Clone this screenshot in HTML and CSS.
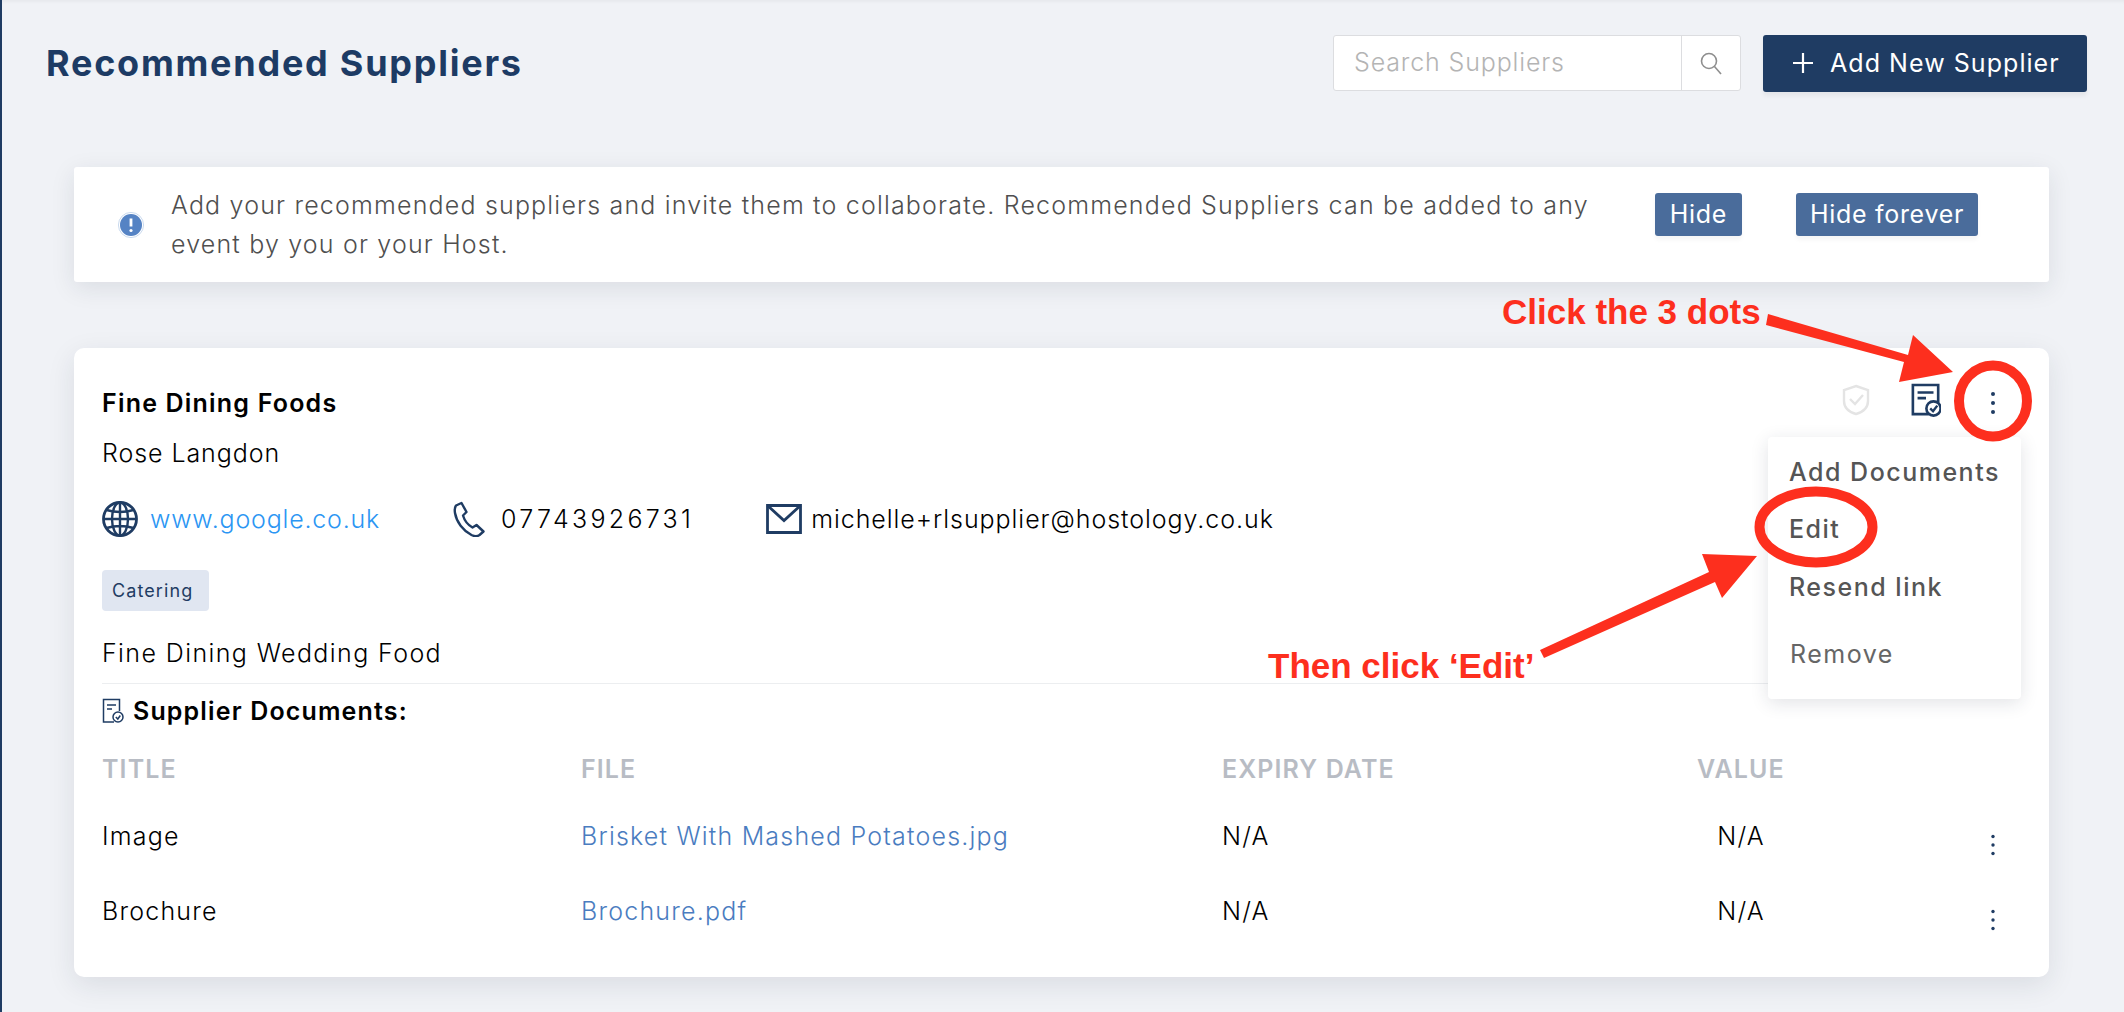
FILE: index.html
```html
<!DOCTYPE html>
<html lang="en">
<head>
<meta charset="utf-8">
<title>Recommended Suppliers</title>
<link rel="stylesheet" href="styles.css">
</head>
<body>
<div class="page">
  <header class="top">
    <h1 class="title">Recommended Suppliers</h1>
    <div class="search">
      <span class="search-text">Search Suppliers</span>
      <span class="search-btn">
        <svg width="24" height="24" viewBox="0 0 24 24" fill="none" stroke="#8e8e8e" stroke-width="1.6"><circle cx="10" cy="10" r="7.5"/><path d="M15.5 15.5 22 23"/></svg>
      </span>
    </div>
    <div class="add-btn">
      <svg width="22" height="22" viewBox="0 0 22 22" stroke="#fff" stroke-width="2.2"><path d="M11 1v20M1 11h20"/></svg>
      <span>Add New Supplier</span>
    </div>
  </header>

  <section class="alert">
    <svg class="alert-icon" width="26" height="26" viewBox="0 0 26 26"><circle cx="13" cy="13" r="12.600" fill="none" stroke="#bcd0ea" stroke-width=".8"/><circle cx="13" cy="13" r="11" fill="#5583c4"/><path d="M13 6.500v8" stroke="#fff" stroke-width="2.800"/><circle cx="13" cy="18.500" r="1.600" fill="#fff"/></svg>
    <p class="alert-text">Add your recommended suppliers and invite them to collaborate. Recommended Suppliers can be added to any event by you or your Host.</p>
    <span class="alert-btn hide">Hide</span>
    <span class="alert-btn forever">Hide forever</span>
  </section>

  <section class="card">
    <div class="name-row">
      <span class="name">Fine Dining Foods</span>
      <svg class="shield" width="28" height="32" viewBox="0 0 28 32" fill="none" stroke="#e4e4e4" stroke-width="2.400"><path d="M14 2 26 6v11c0 7-5 11-12 13C7 28 2 24 2 17V6Z"/><path d="m8 15 5 5 8-9"/></svg>
      <svg class="doc" width="30" height="34" viewBox="0 0 32 36" fill="none" stroke="#1f3c63" stroke-width="2.800"><path d="M19 33H2V2h27v19"/><path d="M7 10h17M7 16h9"/><circle cx="24" cy="27" r="7.600" fill="#fff"/><path d="m20.500 27 3 3 4.500-6" stroke-width="2.600"/></svg>
      <svg class="dots" width="24" height="24" viewBox="0 0 24 24" fill="#1f3c63"><circle cx="12" cy="4" r="2"/><circle cx="12" cy="13" r="2"/><circle cx="12" cy="22" r="2"/></svg>
    </div>
    <div class="contact-name">Rose Langdon</div>
    <div class="contact-row">
      <svg class="ic-globe" width="36" height="36" viewBox="0 0 36 36" fill="none" stroke="#1f3c63" stroke-width="2.400"><circle cx="18" cy="18" r="16.500" stroke-width="2.800"/><ellipse cx="18" cy="18" rx="8" ry="16.500"/><path d="M18 1.500v33M1.500 18h33M4.500 9q13.500 4 27 0M4.500 27q13.500-4 27 0"/></svg>
      <a class="web">www.google.co.uk</a>
      <svg class="ic-phone" width="34" height="36" viewBox="0 0 34 36" fill="none" stroke="#1f3c63" stroke-width="2.400" stroke-linejoin="round"><path d="M3 4.500 8.500 2l5 9-3.500 3.500c1.500 5 5 9.500 9.500 12l4-2.500 7 6.500-4 3.500c-2 1.500-5 1.500-8 0C10 29.500 3.500 21 2 12c-.5-3 0-6 1-7.500Z"/></svg>
      <span class="phone">07743926731</span>
      <svg class="ic-mail" width="36" height="30" viewBox="0 0 36 30" fill="none" stroke="#1f3c63" stroke-width="2.800"><path d="M1.500 1.500h33v27h-33Z"/><path d="m1.500 1.500 16.500 15 16.500-15"/></svg>
      <span class="email">michelle+rlsupplier@hostology.co.uk</span>
    </div>
    <span class="badge">Catering</span>
    <div class="desc">Fine Dining Wedding Food</div>
    <div class="docs-head">
      <svg width="22" height="26" viewBox="0 0 22 26" fill="none" stroke="#1f3c63" stroke-width="1.500"><path d="M12 24H1.500V1.500h16V13"/><path d="M5 7h9M5 11h5"/><circle cx="16" cy="19" r="5" fill="#fff"/><path d="m13.800 19 2 2 2.500-3.500"/></svg>
      <span>Supplier Documents:</span>
    </div>
    <div class="table">
      <div class="tr thead">
        <div class="th">TITLE</div><div class="th">FILE</div><div class="th">EXPIRY DATE</div><div class="th">VALUE</div>
      </div>
      <div class="tr first">
        <div class="td">Image</div><a class="td file">Brisket With Mashed Potatoes.jpg</a><div class="td">N/A</div><div class="td na">N/A</div>
        <svg class="row-dots" width="24" height="24" viewBox="0 0 24 24" fill="#1f3c63"><circle cx="12" cy="3.500" r="1.700"/><circle cx="12" cy="12" r="1.700"/><circle cx="12" cy="20.500" r="1.700"/></svg>
      </div>
      <div class="tr second">
        <div class="td">Brochure</div><a class="td file">Brochure.pdf</a><div class="td">N/A</div><div class="td na">N/A</div>
        <svg class="row-dots" width="24" height="24" viewBox="0 0 24 24" fill="#1f3c63"><circle cx="12" cy="3.500" r="1.700"/><circle cx="12" cy="12" r="1.700"/><circle cx="12" cy="20.500" r="1.700"/></svg>
      </div>
    </div>

    <div class="menu">
      <div class="mi mi-add">Add Documents</div>
      <div class="mi mi-edit">Edit</div>
      <div class="mi mi-resend">Resend link</div>
      <div class="mi mi-remove">Remove</div>
    </div>
  </section>

  <svg class="marks" width="2124" height="1012" viewBox="0 0 2124 1012">
    <path class="mark-fill" d="M1768 314 1908 355 1913 335 1953 372 1899 382 1904 362 1766 325Z"/>
    <ellipse class="mark-line" cx="1993" cy="401" rx="34" ry="35.500"/>
    <ellipse class="mark-line" cx="1816" cy="527" rx="56.500" ry="35.500"/>
    <path class="mark-fill" d="M1540 650 1709 572 1702 554 1757 556 1722 598 1715 582 1544 658Z"/>
  </svg>
  <div class="note note-1">Click the 3 dots</div>
  <div class="note note-2">Then click ‘Edit’</div>
</div>
</body>
</html>
```

FILE: styles.css
```css
* { box-sizing: border-box; }
html, body { margin: 0; padding: 0; }
body { background: #f0f2f6; font-family: Inter, "Open Sans", sans-serif; color: #000; }
.page {
  position: relative;
  width: 2124px;
  height: 1012px;
  overflow: hidden;
  border-left: 2px solid #1f3c63;
  box-shadow: inset 0 4px 4px -3px rgba(0,0,0,.06);
}
.top {
  display: flex;
  align-items: center;
  padding: 35px 37px 0 44px;
  height: 92px;
}
.title {
  margin: 0 auto 2px 0;
  font-size: 36px;
  font-weight: 700;
  letter-spacing: 1.75px;
  color: #1d3b64;
}
.search {
  display: flex;
  width: 408px;
  height: 56px;
  margin-top: -1px;
  background: #fff;
  border: 1px solid #dcdde0;
  border-radius: 3px;
}
.search-text {
  flex: 1;
  padding-left: 20px;
  line-height: 52px;
  font-size: 25px;
  font-weight: 300;
  letter-spacing: .85px;
  color: #b4b4b4;
}
.search-btn {
  display: flex;
  align-items: center;
  justify-content: center;
  width: 59px;
  border-left: 1px solid #dcdde0;
}
.add-btn {
  display: flex;
  align-items: center;
  gap: 16px;
  width: 324px;
  height: 57px;
  margin-left: 22px;
  padding: 0 0 2px 29px;
  background: #1f3c63;
  border-radius: 3px;
  color: #fff;
  font-size: 25px;
  letter-spacing: 1.05px;
  box-shadow: 0 4px 4px rgba(0,0,0,.05);
}
.alert {
  display: flex;
  align-items: center;
  width: 1975px;
  height: 115px;
  margin: 75px 0 0 72px;
  padding-left: 44px;
  background: #fff;
  border-radius: 3px;
  box-shadow: 0 6px 24px rgba(30,40,60,.1);
}
.alert-icon { flex: none; }
.alert-text {
  width: 1440px;
  margin: 0 0 0 27px;
  font-size: 25px;
  line-height: 39px;
  font-weight: 300;
  color: #4f4f4f;
  letter-spacing: 1.18px;
}
.alert-btn {
  height: 43px;
  margin-bottom: 21px;
  background: #4a6c9b;
  border-radius: 3px;
  color: #fff;
  font-size: 25px;
  letter-spacing: .7px;
  line-height: 43px;
  text-align: center;
  box-shadow: 0 4px 4px rgba(0,0,0,.04);
}
.hide { width: 87px; margin-left: 44px; }
.forever { width: 182px; margin-left: 54px; }
.card {
  position: relative;
  width: 1975px;
  height: 629px;
  margin: 66px 0 0 72px;
  padding: 41px 28px 0;
  background: #fff;
  border-radius: 10px;
  box-shadow: 0 8px 28px rgba(30,40,60,.1);
}
.name-row {
  display: flex;
  align-items: center;
  height: 28px;
  padding-right: 16px;
}
.name {
  margin-right: auto;
  font-size: 25px;
  font-weight: 600;
  letter-spacing: 1.2px;
}
.shield { margin: 0 41px 6px 0; }
.doc { margin: 0 40px 6px 0; }
.dots { margin-bottom: 2px; }
.contact-name {
  margin-top: 22px;
  font-size: 25px;
  line-height: 28px;
  font-weight: 300;
  letter-spacing: .93px;
}
.contact-row {
  display: flex;
  align-items: center;
  height: 36px;
  margin-top: 34px;
  font-size: 25px;
  font-weight: 300;
  letter-spacing: .8px;
}
.web { margin-left: 12px; color: #2b96f3; }
.ic-phone { margin-left: 73px; }
.phone { margin-left: 14px; letter-spacing: 3.3px; }
.ic-mail { margin-left: 72px; }
.email { margin-left: 9px; letter-spacing: .95px; }
.badge {
  display: block;
  width: 107px;
  height: 41px;
  margin-top: 33px;
  padding-left: 10px;
  background: #e0e6f1;
  border-radius: 4px;
  color: #1f3c63;
  font-size: 18px;
  letter-spacing: 1.1px;
  line-height: 41px;
}
.desc {
  margin-top: 28px;
  padding-bottom: 16px;
  border-bottom: 1px solid #eceef0;
  font-size: 25px;
  line-height: 28px;
  font-weight: 300;
  letter-spacing: 1.4px;
}
.docs-head {
  display: flex;
  align-items: center;
  gap: 9px;
  height: 28px;
  margin-top: 13px;
  font-size: 25px;
  font-weight: 600;
  letter-spacing: 1.15px;
}
.tr {
  display: grid;
  grid-template-columns: 479px 641px 475px 88px 1fr;
  grid-auto-rows: 28px;
}
.thead { margin-top: 30px; }
.first { margin-top: 39px; }
.second { margin-top: 47px; }
.th {
  font-size: 25px;
  line-height: 28px;
  font-weight: 600;
  letter-spacing: 1.1px;
  color: #b8bcc4;
}
.td {
  font-size: 25px;
  line-height: 28px;
  font-weight: 300;
  letter-spacing: 1.2px;
}
.file { color: #4a7cc0; }
.na { text-align: center; white-space: nowrap; }
.row-dots { justify-self: end; margin: 11px 16px 0 0; }
.menu {
  position: absolute;
  top: 89px;
  right: 28px;
  width: 253px;
  height: 262px;
  background: #fff;
  border-radius: 4px;
  box-shadow: 0 4px 18px rgba(30,40,60,.13);
  color: #555;
  font-size: 25px;
  letter-spacing: 1.5px;
  line-height: 28px;
}
.mi { position: absolute; left: 21px; font-weight: 500; }
.mi-add { top: 21px; }
.mi-edit { top: 78px; }
.mi-resend { top: 136px; }
.mi-remove { top: 203px; left: 22px; font-weight: 400; color: #666; }
.marks { position: absolute; left: -2px; top: 0; pointer-events: none; }
.mark-fill { fill: #fd2f1e; }
.mark-line { fill: none; stroke: #fd2f1e; stroke-width: 10; }
.note {
  position: absolute;
  font-family: "Liberation Sans", Arial, sans-serif;
  font-weight: 700;
  font-size: 35px;
  line-height: 38px;
  color: #fd2f1e;
}
.note-1 { left: 1500px; top: 293px; }
.note-2 { left: 1266px; top: 647px; }
```
